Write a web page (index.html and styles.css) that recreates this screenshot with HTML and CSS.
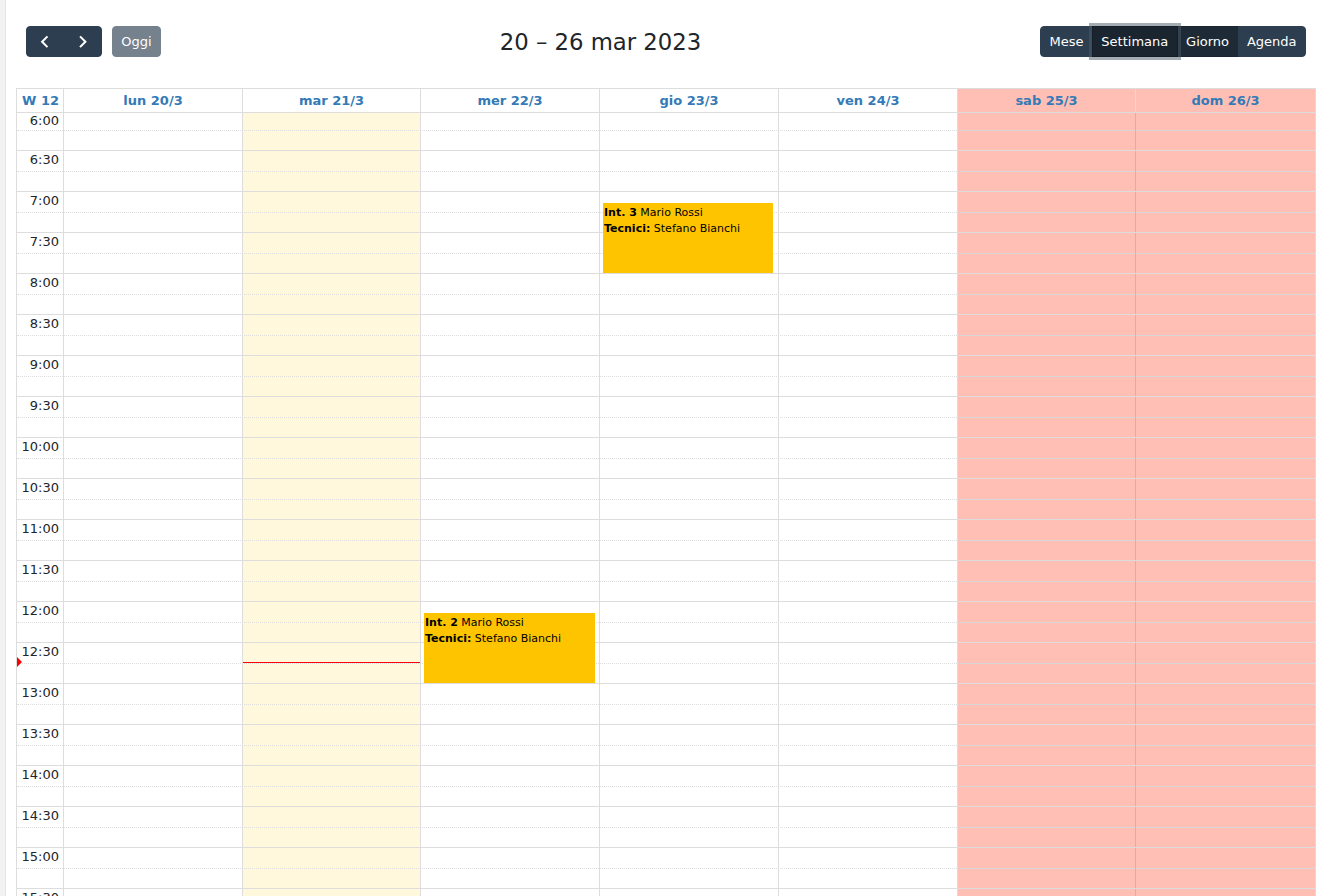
FILE: index.html
```html
<!doctype html>
<html>
    <head>
        <meta charset="utf-8">
        <title>Calendario interventi</title>
        <link rel="stylesheet" href="styles.css">
    </head>
    <body>
        <div class="sidebar"></div>
        <div class="main">
            <div class="toolbar">
                <div class="chunk">
                    <div class="btn-group">
                        <button class="btn icon" title="Settimana precedente">
                            <svg viewBox="0 0 20 20"><polyline points="12.8,4.5 7.3,10 12.8,15.5"/></svg>
                        </button>
                        <button class="btn icon" title="Settimana successiva">
                            <svg viewBox="0 0 20 20"><polyline points="7.2,4.5 12.7,10 7.2,15.5"/></svg>
                        </button>
                    </div>
                    <button class="btn today" disabled>Oggi</button>
                </div>
                <h2 class="title">20 – 26 mar 2023</h2>
                <div class="btn-group">
                    <button class="btn">Mese</button>
                    <button class="btn active">Settimana</button>
                    <button class="btn hover">Giorno</button>
                    <button class="btn">Agenda</button>
                </div>
            </div>

            <div class="calendar">
                <div class="head">
                    <div class="week">W 12</div>
                    <div class="day">lun 20/3</div>
                    <div class="day">mar 21/3</div>
                    <div class="day">mer 22/3</div>
                    <div class="day">gio 23/3</div>
                    <div class="day">ven 24/3</div>
                    <div class="day weekend">sab 25/3</div>
                    <div class="day weekend sun">dom 26/3</div>
                </div>

                <div class="body">
                    <!-- day columns: backgrounds and vertical lines -->
                    <div class="cols">
                        <div></div>
                        <div class="col"></div>
                        <div class="col today"></div>
                        <div class="col"></div>
                        <div class="col"></div>
                        <div class="col"></div>
                        <div class="col weekend"></div>
                        <div class="col weekend sun"></div>
                    </div>

                    <!-- quarter hour rows, labels every half hour -->
                    <div class="slots">
                        <div class="slot first"><span class="time">6:00</span></div>
                        <div class="slot minor"></div>
                        <div class="slot"><span class="time">6:30</span></div>
                        <div class="slot minor"></div>
                        <div class="slot"><span class="time">7:00</span></div>
                        <div class="slot minor"></div>
                        <div class="slot"><span class="time">7:30</span></div>
                        <div class="slot minor"></div>
                        <div class="slot"><span class="time">8:00</span></div>
                        <div class="slot minor"></div>
                        <div class="slot"><span class="time">8:30</span></div>
                        <div class="slot minor"></div>
                        <div class="slot"><span class="time">9:00</span></div>
                        <div class="slot minor"></div>
                        <div class="slot"><span class="time">9:30</span></div>
                        <div class="slot minor"></div>
                        <div class="slot"><span class="time">10:00</span></div>
                        <div class="slot minor"></div>
                        <div class="slot"><span class="time">10:30</span></div>
                        <div class="slot minor"></div>
                        <div class="slot"><span class="time">11:00</span></div>
                        <div class="slot minor"></div>
                        <div class="slot"><span class="time">11:30</span></div>
                        <div class="slot minor"></div>
                        <div class="slot"><span class="time">12:00</span></div>
                        <div class="slot minor"></div>
                        <div class="slot"><span class="time">12:30</span></div>
                        <div class="slot minor"></div>
                        <div class="slot"><span class="time">13:00</span></div>
                        <div class="slot minor"></div>
                        <div class="slot"><span class="time">13:30</span></div>
                        <div class="slot minor"></div>
                        <div class="slot"><span class="time">14:00</span></div>
                        <div class="slot minor"></div>
                        <div class="slot"><span class="time">14:30</span></div>
                        <div class="slot minor"></div>
                        <div class="slot"><span class="time">15:00</span></div>
                        <div class="slot minor"></div>
                        <div class="slot"><span class="time">15:30</span></div>
                        <div class="slot minor"></div>
                        <div class="slot"><span class="time">16:00</span></div>
                        <div class="slot minor"></div>
                        <div class="slot"><span class="time">16:30</span></div>
                        <div class="slot minor"></div>
                    </div>

                    <!-- events and the current time marker -->
                    <div class="events">
                        <div class="event int3">
                            <div><b>Int. 3</b> Mario Rossi</div>
                            <div><b>Tecnici:</b> Stefano Bianchi</div>
                        </div>
                        <div class="event int2">
                            <div><b>Int. 2</b> Mario Rossi</div>
                            <div><b>Tecnici:</b> Stefano Bianchi</div>
                        </div>
                        <div class="now-arrow"></div>
                        <div class="now-line"></div>
                    </div>
                </div>
            </div>
        </div>
    </body>
</html>
```

FILE: styles.css
```css
* {
    box-sizing: border-box;
}
html, body {
    margin: 0;
    height: 100%;
    overflow: hidden;
}
body {
    display: flex;
    font-family: "DejaVu Sans", sans-serif;
    font-size: 13px;
    color: #212529;
    background: #fff;
}
.sidebar {
    width: 6px;
    flex: none;
    background: #f2f2f2;
    border-right: 1px solid #e6e6e6;
}
.main {
    flex: 1;
    padding: 25px 12px 0 10px;
}

/* toolbar */
.toolbar {
    display: flex;
    justify-content: space-between;
    align-items: center;
    height: 33px;
    padding: 0 10px;
    margin-bottom: 30px;
}
.chunk {
    display: flex;
    align-items: center;
}
.title {
    margin: 0;
    font-size: 22.75px;
    font-weight: normal;
    color: #212529;
}
.btn-group {
    display: flex;
}
.btn {
    font-family: inherit;
    font-size: 13px;
    line-height: 19.5px;
    padding: 5.2px 8.45px;
    color: #fff;
    background: #2c3e50;
    border: 1px solid #2c3e50;
    border-radius: 0;
    margin: 0;
}
.btn-group .btn + .btn {
    margin-left: -1px;
}
.btn-group .btn:first-child {
    border-radius: 4px 0 0 4px;
}
.btn-group .btn:last-child {
    border-radius: 0 4px 4px 0;
}
.btn svg {
    display: block;
    width: 19.5px;
    height: 19.5px;
    fill: none;
    stroke: #fff;
    stroke-width: 2.1;
}
.btn.today {
    margin-left: 10px;
    border-radius: 4px;
    opacity: 0.65;
}
.btn.hover {
    background: #1e2b37;
    border-color: #1a252f;
}
.btn.active {
    position: relative;
    z-index: 1;
    background: #1a252f;
    border-color: #151e27;
    box-shadow: 0 0 0 3px rgba(76, 91, 106, 0.5);
}

/* grid */
.calendar {
    border: 1px solid #ddd;
}
.head, .cols, .events {
    display: grid;
    grid-template-columns: 46px 179px 178px 179px 179px 179px 178px 180px;
}
.head {
    border-bottom: 1px solid #ddd;
    font-weight: bold;
    color: #337ab7;
    line-height: 23px;
}
.head .week {
    text-align: right;
    padding-right: 4px;
}
.head .day {
    text-align: center;
    border-left: 1px solid #ddd;
}
.weekend {
    background: #ffbfb5;
}
.body {
    display: grid;
}
.body > * {
    grid-area: 1 / 1;
}
.col {
    border-left: 1px solid #ddd;
}
.col.today {
    background: #fff8dd;
}
.col.sun {
    border-left-color: #e8a99f;
}

.slot {
    height: 21px;
    border-top: 1px solid #ddd;
}
.slot.minor {
    height: 20px;
    border-top-style: dotted;
}
.slot.first {
    height: 18px;
    border-top: 0;
}
.time {
    display: block;
    width: 46px;
    text-align: right;
    padding-right: 4px;
    line-height: 18px;
}
.slot.first .time {
    margin-top: -1px;
}

.events {
    grid-template-rows: 18px 20px repeat(21, 21px 20px);
}
.event {
    margin: 11px 5px 1px 4px;
    padding: 1px 0 0 0;
    background: #ffc400;
    border: 1px solid #ffc400;
    color: #000;
    font-size: 11px;
    line-height: 16px;
    white-space: nowrap;
    overflow: hidden;
}
.event.int3 {
    grid-column: 5;
    grid-row: 5 / 9;
}
.event.int2 {
    grid-column: 4;
    grid-row: 25 / 29;
    margin-right: 4px;
}
.now-arrow {
    grid-column: 1;
    grid-row: 27 / 29;
    align-self: start;
    justify-self: start;
    margin-top: 14px;
    width: 0;
    height: 0;
    border-style: solid;
    border-width: 5px 0 5px 5px;
    border-color: transparent transparent transparent red;
}
.now-line {
    grid-column: 3;
    grid-row: 27;
    align-self: start;
    margin: 19px 0 0 1px;
    height: 1px;
    background: red;
}
```
